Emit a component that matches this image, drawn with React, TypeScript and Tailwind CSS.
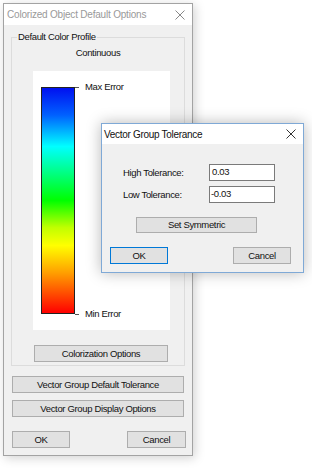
import React from "react"

function CloseGlyph({ color = "#000" }: { color?: string }) {
	return (
		<svg width="10" height="10" viewBox="0 0 10 10" className="block">
			<path d="M0.5 0.5L9.5 9.5M9.5 0.5L0.5 9.5" stroke={color} strokeWidth="1" fill="none" />
		</svg>
	)
}

function WinButton({ label, className = "" }: { label: string; className?: string }) {
	return (
		<button
			type="button"
			className={"flex items-center justify-center border border-[#adadad] bg-[#e1e1e1] text-[9.5px] leading-[12px] tracking-[-0.35px] text-[#111] " + className}
		>
			{label}
		</button>
	)
}

export default function App() {
	return (
		<div className="relative h-[468px] w-[312px] overflow-hidden bg-white p-[3px] font-['Liberation_Sans',Arial,sans-serif] text-[#111]">
			{/* main window */}
			<div className="flex h-[453px] w-[190px] flex-col border border-[#a3a3a3] bg-[#f0f0f0] shadow-[2px_2px_10px_rgba(0,0,0,0.18)]">
				<div className="flex h-[21px] shrink-0 items-center justify-between bg-white pl-[3px] pr-[7px]">
					<span className="text-[10px] tracking-[-0.2px] text-[#999]">Colorized Object Default Options</span>
					<CloseGlyph color="#888" />
				</div>

				<fieldset className="ml-[7px] mt-[6px] w-[174px] border border-[#dcdcdc] pb-[3px]">
					<legend className="ml-[5px] px-[1px] text-[9.5px] leading-[12px] tracking-[-0.35px]">Default Color Profile</legend>
					<div className="mt-[4px] text-center text-[9.5px] leading-[12px] tracking-[-0.35px]">Continuous</div>

					<div className="ml-[21px] mt-[12px] flex h-[259px] w-[137px] bg-white pl-[8px] pt-[16px]">
						<div className="h-[227px] w-[34px] border border-[#222] bg-[linear-gradient(to_bottom,#0010f0,#0060ff_12%,#00ffff_26%,#00ff80_38%,#00ff00_50%,#c0ff00_62%,#ffff00_70%,#ffa000_82%,#ff0000)]" />
						<div className="-mt-[6px] flex h-[239px] flex-col justify-between">
							<div className="flex h-[12px] items-center">
								<span className="h-[1px] w-[4px] bg-[#555]" />
								<span className="ml-[6px] text-[9.5px] leading-[12px] tracking-[-0.35px]">Max Error</span>
							</div>
							<div className="flex h-[12px] items-center">
								<span className="h-[1px] w-[4px] bg-[#555]" />
								<span className="ml-[6px] text-[9.5px] leading-[12px] tracking-[-0.35px]">Min Error</span>
							</div>
						</div>
					</div>

					<WinButton label="Colorization Options" className="ml-[22px] mt-[15px] h-[17px] w-[134px]" />
				</fieldset>

				<WinButton label="Vector Group Default Tolerance" className="ml-[8px] mt-[10px] h-[17px] w-[172px]" />
				<WinButton label="Vector Group Display Options" className="ml-[8px] mt-[7px] h-[17px] w-[172px]" />

				<div className="ml-[8px] mt-[14px] flex w-[174px] justify-between">
					<WinButton label="OK" className="h-[17px] w-[58px]" />
					<WinButton label="Cancel" className="h-[17px] w-[59px]" />
				</div>
			</div>

			{/* tolerance dialog on top */}
			<div className="absolute left-[101px] top-[123px] flex h-[150px] w-[203px] flex-col border border-[#7fa9d6] bg-[#f0f0f0] shadow-[0_0_14px_rgba(0,0,0,0.28)]">
				<div className="flex h-[20px] shrink-0 items-center justify-between bg-white pl-[2px] pr-[7px]">
					<span className="text-[10px] tracking-[-0.3px] text-[#111]">Vector Group Tolerance</span>
					<CloseGlyph color="#333" />
				</div>

				<div className="ml-[21px] mt-[20px] flex items-center">
					<span className="w-[86px] text-[9.5px] leading-[12px] tracking-[-0.35px]">High Tolerance:</span>
					<div className="flex h-[17px] w-[66px] items-start border border-[#7a7a7a] bg-white pl-[2px] pt-[1px] text-[9.5px] leading-[12px] tracking-[-0.35px]">0.03</div>
				</div>
				<div className="ml-[21px] mt-[5px] flex items-center">
					<span className="w-[86px] text-[9.5px] leading-[12px] tracking-[-0.35px]">Low Tolerance:</span>
					<div className="flex h-[17px] w-[66px] items-start border border-[#7a7a7a] bg-white pl-[1px] pt-[1px] text-[9.5px] leading-[12px] tracking-[-0.35px]">-0.03</div>
				</div>

				<WinButton label="Set Symmetric" className="ml-[34px] mt-[14px] h-[16px] w-[121px]" />

				<div className="ml-[8px] mt-[14px] flex">
					<WinButton label="OK" className="h-[17px] w-[58px] !border-[#0078d7]" />
					<WinButton label="Cancel" className="ml-[65px] h-[17px] w-[58px]" />
				</div>
			</div>
		</div>
	)
}
